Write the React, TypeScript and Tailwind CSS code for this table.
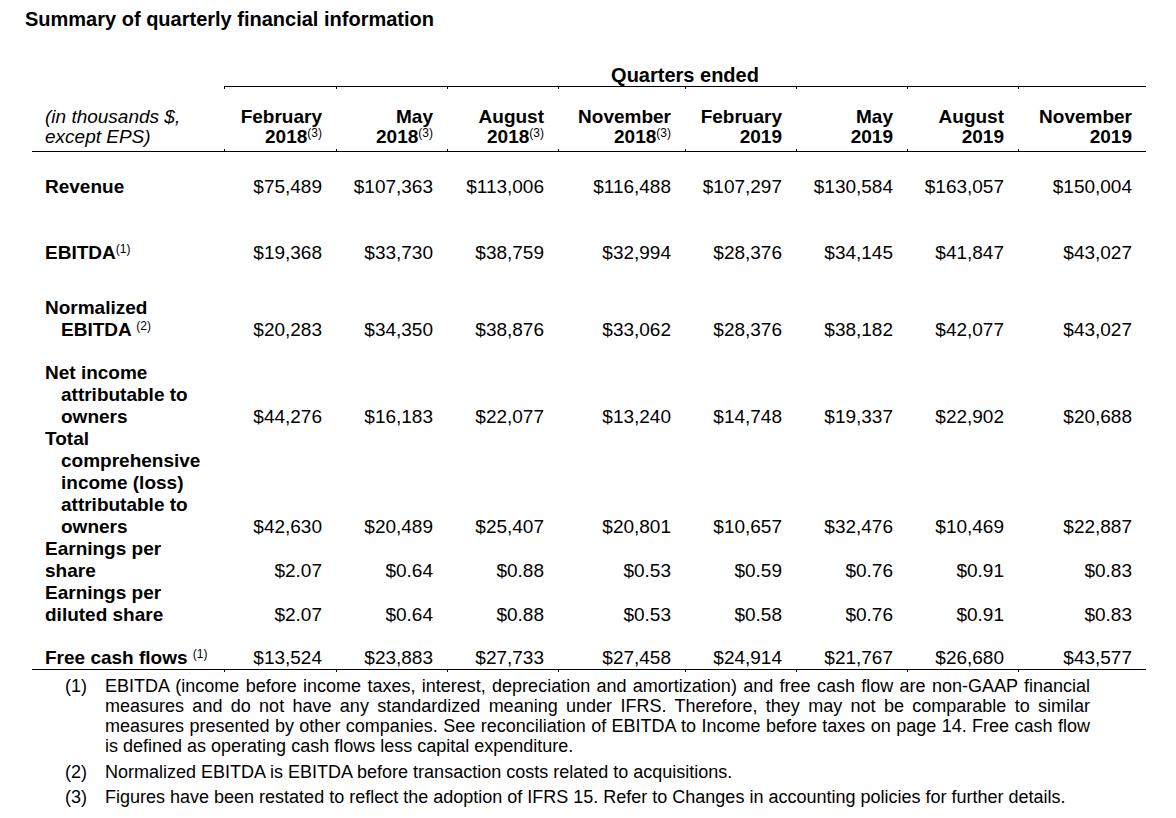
const COLS =
  "grid grid-cols-[192px_112px_111px_111px_127px_111px_111px_111px_128px]";

const QUARTERS: { month: string; year: string; restated: boolean }[] = [
  { month: "February", year: "2018", restated: true },
  { month: "May", year: "2018", restated: true },
  { month: "August", year: "2018", restated: true },
  { month: "November", year: "2018", restated: true },
  { month: "February", year: "2019", restated: false },
  { month: "May", year: "2019", restated: false },
  { month: "August", year: "2019", restated: false },
  { month: "November", year: "2019", restated: false },
];

type Row = {
  key: string;
  pad: string;
  label: React.ReactNode;
  values: string[];
  last?: boolean;
};

function Sup(props: { children: React.ReactNode }) {
  return (
    <sup className="relative -top-[6px] align-baseline text-[12px] leading-none font-normal">
      {props.children}
    </sup>
  );
}

function Indent(props: { children: React.ReactNode }) {
  return <div className="pl-[16px]">{props.children}</div>;
}

// tiny column marks that hang off the rules, as in the source table
function Ticks(props: { skipFirst?: boolean }) {
  return (
    <div className={`${COLS} h-[2px]`}>
      {Array.from({ length: 9 }).map((_, i) => (
        <div
          className={i === 0 && props.skipFirst ? "" : i === 0 ? "" : "border-l border-black"}
          key={i}
        />
      ))}
    </div>
  );
}

const ROWS: Row[] = [
  {
    key: "revenue",
    pad: "pt-[24px]",
    label: <div>Revenue</div>,
    values: ["$75,489", "$107,363", "$113,006", "$116,488", "$107,297", "$130,584", "$163,057", "$150,004"],
  },
  {
    key: "ebitda",
    pad: "pt-[44px]",
    label: (
      <div>
        EBITDA<Sup>(1)</Sup>
      </div>
    ),
    values: ["$19,368", "$33,730", "$38,759", "$32,994", "$28,376", "$34,145", "$41,847", "$43,027"],
  },
  {
    key: "normalized",
    pad: "pt-[33px]",
    label: (
      <>
        <div>Normalized</div>
        <Indent>
          EBITDA <Sup>(2)</Sup>
        </Indent>
      </>
    ),
    values: ["$20,283", "$34,350", "$38,876", "$33,062", "$28,376", "$38,182", "$42,077", "$43,027"],
  },
  {
    key: "net-income",
    pad: "pt-[21px]",
    label: (
      <>
        <div>Net income</div>
        <Indent>attributable to</Indent>
        <Indent>owners</Indent>
      </>
    ),
    values: ["$44,276", "$16,183", "$22,077", "$13,240", "$14,748", "$19,337", "$22,902", "$20,688"],
  },
  {
    key: "comprehensive",
    pad: "pt-0",
    label: (
      <>
        <div>Total</div>
        <Indent>comprehensive</Indent>
        <Indent>income (loss)</Indent>
        <Indent>attributable to</Indent>
        <Indent>owners</Indent>
      </>
    ),
    values: ["$42,630", "$20,489", "$25,407", "$20,801", "$10,657", "$32,476", "$10,469", "$22,887"],
  },
  {
    key: "eps",
    pad: "pt-0",
    label: (
      <>
        <div>Earnings per</div>
        <div>share</div>
      </>
    ),
    values: ["$2.07", "$0.64", "$0.88", "$0.53", "$0.59", "$0.76", "$0.91", "$0.83"],
  },
  {
    key: "eps-diluted",
    pad: "pt-0",
    label: (
      <>
        <div>Earnings per</div>
        <div>diluted share</div>
      </>
    ),
    values: ["$2.07", "$0.64", "$0.88", "$0.53", "$0.58", "$0.76", "$0.91", "$0.83"],
  },
  {
    key: "fcf",
    pad: "pt-[21px]",
    label: (
      <div>
        Free cash flows <Sup>(1)</Sup>
      </div>
    ),
    values: ["$13,524", "$23,883", "$27,733", "$27,458", "$24,914", "$21,767", "$26,680", "$43,577"],
    last: true,
  },
];

const JUSTIFY = "text-justify [text-align-last:justify]";

export default function App() {
  return (
    <div className="min-h-[818px] w-[1176px] bg-white pt-[7px] text-black [font-family:'Liberation_Sans',Arial,sans-serif]">
      <div className="pl-[25px] text-[20px] leading-[24px] font-bold">
        Summary of quarterly financial information
      </div>

      <div className="mt-[32px] ml-[32px] w-[1114px] text-[19px]">
        <div className="ml-[192px] border-b border-black pt-px text-center text-[20px] leading-[22px] font-bold">
          Quarters ended
        </div>
        <Ticks skipFirst />

        <div className={`${COLS} pt-[18px] pb-[2px] leading-[20px]`}>
          <div className="pl-[13px] italic">
            <div>(in thousands $,</div>
            <div>except EPS)</div>
          </div>
          {QUARTERS.map((q) => (
            <div className="pr-[14px] text-right font-bold" key={q.month + q.year}>
              <div>{q.month}</div>
              <div>
                {q.year}
                {q.restated ? <Sup>(3)</Sup> : null}
              </div>
            </div>
          ))}
        </div>
        <div className="border-b border-black">
          <Ticks />
        </div>

        {ROWS.map((row) => (
          <div
            className={`${COLS} ${row.pad} leading-[22px] ${row.last ? "border-b border-black" : ""}`}
            key={row.key}
          >
            <div className="pl-[13px] font-bold">{row.label}</div>
            {row.values.map((value, i) => (
              <div className="self-end pr-[14px] text-right" key={i}>
                {value}
              </div>
            ))}
          </div>
        ))}
        <Ticks />
      </div>

      <div className="mt-[4px] ml-[65px] text-[18px] leading-[20px]">
        <div className="flex">
          <div className="w-[40px] shrink-0">(1)</div>
          <div className="w-[985px]">
            <div className={JUSTIFY}>
              EBITDA (income before income taxes, interest, depreciation and amortization) and free cash flow are non-GAAP financial
            </div>
            <div className={JUSTIFY}>
              measures and do not have any standardized meaning under IFRS. Therefore, they may not be comparable to similar
            </div>
            <div className={JUSTIFY}>
              measures presented by other companies. See reconciliation of EBITDA to Income before taxes on page 14. Free cash flow
            </div>
            <div>is defined as operating cash flows less capital expenditure.</div>
          </div>
        </div>
        <div className="mt-[6px] flex">
          <div className="w-[40px] shrink-0">(2)</div>
          <div>Normalized EBITDA is EBITDA before transaction costs related to acquisitions.</div>
        </div>
        <div className="mt-[5px] flex">
          <div className="w-[40px] shrink-0">(3)</div>
          <div>Figures have been restated to reflect the adoption of IFRS 15. Refer to Changes in accounting policies for further details.</div>
        </div>
      </div>
    </div>
  );
}
